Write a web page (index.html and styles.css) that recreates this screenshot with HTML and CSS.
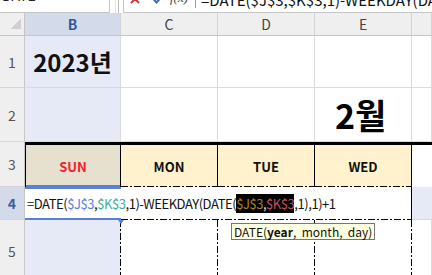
FILE: index.html
```html
<html>
<head>
<link rel="stylesheet" href="styles.css">
</head>
<body>
<div class="toolbar">
  <div class="namebox"><span class="namebox-text">DATE</span></div>
  <div class="grip"></div>
  <div class="fbar">
    <svg class="ico-cancel" width="10" height="10" viewBox="0 0 10 10"><path d="M1 1 L9 9 M9 1 L1 9" stroke="#d23a3a" stroke-width="2" fill="none"/></svg>
    <svg class="ico-enter" width="11" height="10" viewBox="0 0 11 10"><path d="M1 4 L5.5 9 L10 4 L8.5 2.5 L5.5 6 L2.5 2.5 Z" fill="#3868c2"/></svg>
    <span class="fx">f(x)</span>
    <span class="fsep"></span>
    <span class="ftext">=DATE($J$3,$K$3,1)-WEEKDAY(DATE($J$3,$K$3,1),1)+1</span>
  </div>
</div>
<div class="sheet">
  <div class="corner"></div>
  <div class="colhead sel">B</div>
  <div class="colhead">C</div>
  <div class="colhead">D</div>
  <div class="colhead">E</div>
  <div class="colhead"></div>

  <div class="rowhead">1</div>
  <div class="cell colb year">2023년</div>
  <div class="cell"></div>
  <div class="cell"></div>
  <div class="cell"></div>
  <div class="cell"></div>

  <div class="rowhead">2</div>
  <div class="cell colb"></div>
  <div class="cell"></div>
  <div class="cell"></div>
  <div class="cell month">2월</div>
  <div class="cell"></div>

  <div class="rowhead">3</div>
  <div class="day sun">SUN</div>
  <div class="day">MON</div>
  <div class="day">TUE</div>
  <div class="day">WED</div>
  <div class="day-rest"></div>

  <div class="rowhead sel">4</div>
  <div class="edit">
    <span>=DATE(<span class="ref1">$J$3</span>,<span class="ref2">$K$3</span>,1)-WEEKDAY(DATE(<span class="hl"><span class="inv1">$J$3</span>,<span class="inv2">$K$3</span></span>,1),1)+1</span>
    <div class="tip">DATE(<b>year</b>,  month,  day)</div>
  </div>
  <div class="cell colb edge"></div>

  <div class="rowhead">5</div>
  <div class="cell colb dd"></div>
  <div class="cell dd"></div>
  <div class="cell dd"></div>
  <div class="cell dd"></div>
  <div class="cell"></div>
</div>
</body>
</html>
```

FILE: styles.css
```css
body {
  margin: 0;
  width: 432px;
  height: 275px;
  overflow: hidden;
  background: #fff;
  font-family: "Noto Sans CJK KR", "Noto Sans", sans-serif;
  }
.toolbar {
  display: flex;
  height: 13px;
  overflow: hidden;
  }
.namebox {
  box-sizing: border-box;
  flex: none;
  width: 110px;
  height: 13px;
  border-right: 1px solid #c6c6c6;
  border-bottom: 1px solid #c6c6c6;
  }
.namebox-text {
  display: block;
  margin: -12px 0 0 2px;
  font-size: 14px;
  line-height: 15px;
  color: #222;
  }
.grip {
  flex: none;
  width: 2px;
  height: 13px;
  margin-left: 5px;
  border-left: 1px solid #e2e2e2;
  border-right: 1px solid #b9b9b9;
  }
.fbar {
  box-sizing: border-box;
  flex: 1;
  min-width: 0;
  display: flex;
  align-items: flex-start;
  height: 13px;
  margin-left: 4px;
  overflow: hidden;
  border-left: 1px solid #c6c6c6;
  border-bottom: 1px solid #c6c6c6;
  }
.fbar > * {
  flex: none;
  }
.ico-cancel {
  margin: -6px 0 0 6px;
  }
.ico-enter {
  margin: -5px 0 0 11px;
  }
.fx {
  margin: -10px 0 0 8px;
  font-family: "Liberation Serif", serif;
  font-style: italic;
  font-size: 13px;
  line-height: 15px;
  color: #444;
  }
.fsep {
  width: 1px;
  height: 8px;
  margin-left: 7px;
  background: #9a9a9a;
  }
.ftext {
  margin: -8px 0 0 5px;
  font-size: 15px;
  line-height: 15px;
  white-space: nowrap;
  color: #111;
  }

.sheet {
  display: grid;
  grid-template-columns: 25px 96px 97px 97px 97px 20px;
  grid-template-rows: 23px 52px 54px 45px 33px 62px;
  }
.corner {
  background: linear-gradient(135deg, transparent 50%, #cfcfcf 50%) no-repeat right 3px bottom 6px / 10px 10px, #efefef;
  border-right: 1px solid #c6c6c6;
  border-bottom: 1px solid #c6c6c6;
  }
.colhead {
  display: flex;
  align-items: center;
  justify-content: center;
  background: #efefef;
  border-right: 1px solid #d4d4d4;
  border-bottom: 1px solid #c6c6c6;
  font-size: 14px;
  color: #444;
  }
.colhead.sel {
  background: #d3dbeb;
  color: #33569a;
  font-weight: bold;
  }
.rowhead {
  display: flex;
  align-items: center;
  justify-content: center;
  background: #efefef;
  border-right: 1px solid #c6c6c6;
  border-bottom: 1px solid #d4d4d4;
  font-size: 14px;
  color: #555;
  }
.rowhead.sel {
  background: #d3dbeb;
  color: #3b5c9c;
  font-weight: bold;
  }
.cell {
  border-right: 1px solid #dadada;
  border-bottom: 1px solid #dadada;
  }
.colb {
  background-color: #e5eaf6;
  }
.year {
  display: flex;
  align-items: center;
  justify-content: center;
  font-size: 24px;
  font-weight: bold;
  color: #111;
  }
.month {
  display: flex;
  align-items: center;
  padding-left: 20px;
  font-size: 34px;
  font-weight: bold;
  color: #000;
  }

.day {
  display: flex;
  align-items: center;
  justify-content: center;
  border-top: 3px solid #000;
  border-right: 1px solid #000;
  background: repeating-linear-gradient(90deg, #000 0 7px, transparent 7px 9px, #000 9px 11px, transparent 11px 13px) left bottom / 100% 1px no-repeat, #fff2cc;
  font-size: 13px;
  font-weight: bold;
  color: #111;
  }
.day.sun {
  border-left: 1px solid #000;
  background: linear-gradient(#5b7fd2, #5b7fd2) left bottom / 100% 2px no-repeat, #e6e0cf;
  color: #f0202c;
  }
.day-rest {
  border-top: 3px solid #000;
  }

.edit {
  position: relative;
  grid-column: span 4;
  display: flex;
  align-items: center;
  padding-left: 2px;
  border-right: 1px solid #000;
  background:
    linear-gradient(#5b7fd2, #5b7fd2) left top / 96px 2px no-repeat,
    linear-gradient(#5b7fd2, #5b7fd2) left bottom / 96px 2px no-repeat,
    repeating-linear-gradient(90deg, #000 0 7px, transparent 7px 9px, #000 9px 11px, transparent 11px 13px) 96px bottom / calc(100% - 96px) 1px no-repeat,
    #fff;
  font-size: 13px;
  letter-spacing: -0.45px;
  white-space: nowrap;
  color: #111;
  }
.edit::after {
  content: "";
  position: absolute;
  left: 93px;
  bottom: -4px;
  border-left: 3px solid transparent;
  border-right: 3px solid transparent;
  border-top: 4px solid #5b7fd2;
  }
.ref1 {
  color: #5a7fe0;
  }
.ref2 {
  color: #3fae9a;
  }
.hl {
  background: #000;
  color: #ddd;
  }
.inv1 {
  color: #a5801f;
  }
.inv2 {
  color: #c05165;
  }
.tip {
  position: absolute;
  left: 206px;
  top: 36px;
  padding: 0 2px;
  border: 1px solid #767676;
  background: #ffffe1;
  font-size: 12px;
  line-height: 15px;
  letter-spacing: 0;
  white-space: pre;
  color: #111;
  }
.edge {
  border-right: 0;
  }
.dd {
  border-bottom: 0;
  border-right: 0;
  background-image: repeating-linear-gradient(180deg, #000 0 7px, transparent 7px 9px, #000 9px 11px, transparent 11px 13px);
  background-position: right top;
  background-size: 1px 100%;
  background-repeat: no-repeat;
  }
```
